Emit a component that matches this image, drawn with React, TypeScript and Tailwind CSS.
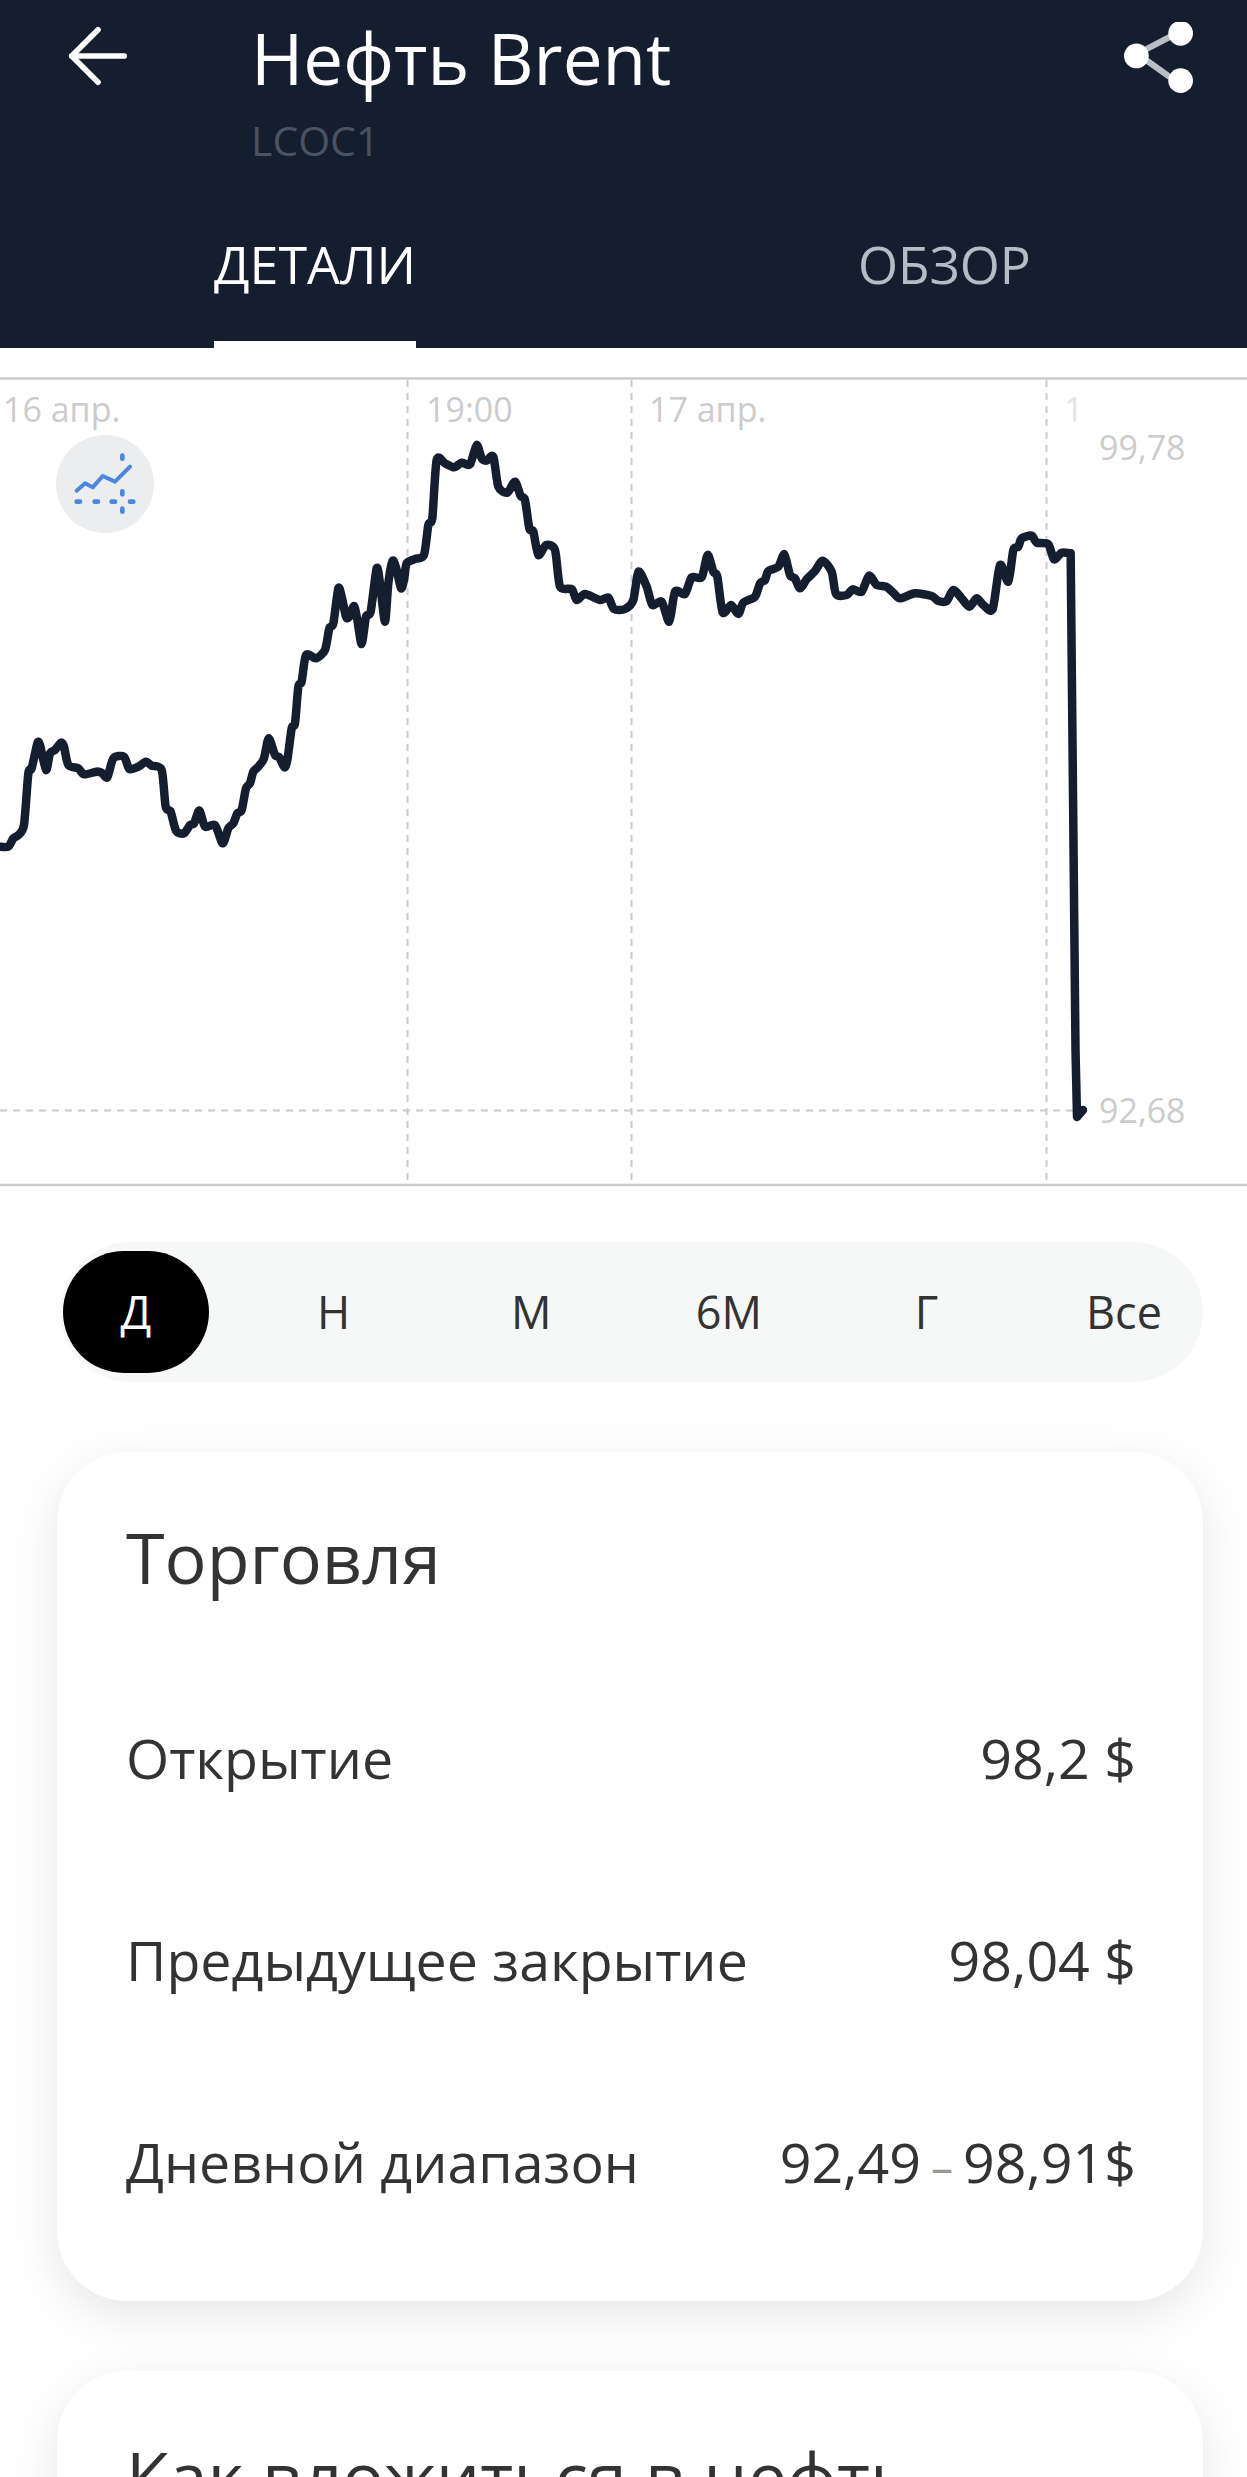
import type { ReactNode } from "react";
import { ArrowLeft } from "lucide-react";

// traced from the chart, [x, y] in crop pixels at 3x
const partA = [[0,1430],[25,1430],[40,1405],[55,1395],[72,1365],[85,1210],[95,1195],[112,1120],[120,1125],[138,1200],[150,1150],[165,1140],[183,1118],[192,1130],[205,1185],[235,1195],[252,1213],[290,1205],[305,1208],[322,1222],[340,1165],[372,1160],[388,1197],[415,1190],[438,1175],[455,1187],[485,1200],[497,1310],[512,1325],[528,1382],[552,1390],[570,1365],[582,1360],[598,1322],[615,1370],[645,1365],[668,1420],[685,1375],[700,1360],[712,1330],[725,1320],[738,1255],[750,1240],[760,1205],[775,1190],[792,1165],[806,1105],[825,1155],[838,1162],[853,1192],[862,1170],[875,1075],[885,1060],[895,950],[905,935],[918,855],[948,865],[975,840],[988,775],[1000,760],[1015,655],[1025,680],[1038,740],[1048,740],[1062,708],[1072,750],[1085,822],[1098,740],[1112,725],[1130,595],[1140,640],[1155,755],[1165,640],[1178,572],[1190,600],[1203,655],[1212,630]];
const partB = [[20,580],[45,567],[72,555],[85,465],[97,445],[110,270],[135,280],[162,292],[185,278],[210,283],[230,225],[245,265],[260,272],[280,260],[295,350],[322,368],[345,335],[362,378],[375,390],[388,475],[400,485],[415,555],[438,525],[465,540],[480,650],[515,657],[530,690],[555,672],[600,690],[625,683],[642,717],[675,717],[700,690],[715,605],[740,650],[757,705],[785,695],[808,755],[825,665],[855,672],[875,622],[905,622],[923,555],[940,605],[952,620],[968,727],[993,705],[1015,732],[1030,698],[1065,680],[1080,640],[1095,630],[1105,603],[1135,590],[1153,553],[1170,615],[1185,625]];
const partC = [[0,655],[20,628],[45,603],[68,572],[95,605],[108,672],[140,675],[158,658],[185,665],[207,617],[230,645],[258,650],[280,668],[300,685],[345,670],[395,678],[415,693],[440,693],[460,660],[485,685],[508,710],[530,685],[550,705],[578,717],[600,585],[625,635],[640,540],[655,530],[665,505],[695,497],[710,518],[745,523],[762,568],[785,548],[812,550]];

const toPage = (pts: number[][], ox: number) => pts.map(([x, y]) => [ox + x / 3, 370 + y / 3]);

// soft corners, the drop at the end stays straight
const smooth = (pts: number[][]) => {
  let d = `M${pts[0][0]} ${pts[0][1]}`;
  for (let i = 0; i < pts.length - 1; i++) {
    const p0 = pts[Math.max(i - 1, 0)];
    const p1 = pts[i];
    const p2 = pts[i + 1];
    const p3 = pts[Math.min(i + 2, pts.length - 1)];
    const c1x = p1[0] + (p2[0] - p0[0]) / 8;
    const c1y = p1[1] + (p2[1] - p0[1]) / 8;
    const c2x = p2[0] - (p3[0] - p1[0]) / 8;
    const c2y = p2[1] - (p3[1] - p1[1]) / 8;
    d += `C${c1x} ${c1y} ${c2x} ${c2y} ${p2[0]} ${p2[1]}`;
  }
  return d;
};

const linePath =
  smooth([...toPage(partA, 0), ...toPage(partB, 400), ...toPage(partC, 800)]) + "L1075.5 1050L1077 1117L1083 1110";

const ranges = ["Д", "Н", "М", "6М", "Г", "Все"];

const rows: { label: string; value: ReactNode }[] = [
  { label: "Открытие", value: "98,2 $" },
  { label: "Предыдущее закрытие", value: "98,04 $" },
  {
    label: "Дневной диапазон",
    value: (
      <>
        92,49<span className="mx-[10px] text-[44px] leading-none text-[#999999]">–</span>98,91$
      </>
    ),
  },
];

function Card({ title, children }: { title: string; children?: ReactNode }) {
  return (
    <div className="rounded-[70px] bg-white pl-[69px] pr-[67px] pt-[55px] pb-[89px] shadow-[0_14px_50px_rgba(0,0,0,0.1)]">
      <h2 className="text-[70px] leading-[100px] text-[#333333] whitespace-nowrap">{title}</h2>
      {children}
    </div>
  );
}

export default function App() {
  return (
    <div className="h-[2477px] overflow-hidden bg-white font-['Open_Sans',sans-serif]">
      {/* Header */}
      <header className="relative h-[348px] bg-[#141e2e] text-white">
        <div className="flex items-start justify-between pl-[53px] pr-[53px] pt-[11px]">
          <ArrowLeft className="h-[90px] w-[90px]" strokeWidth={1.5} />
          <div className="ml-[108px] mt-[3px] flex-1">
            <h1 className="text-[71px] leading-[88px]">Нефть Brent</h1>
            <p className="mt-[13px] text-[41px] leading-[50px] text-[#4a5361]">LCOC1</p>
          </div>
          <svg viewBox="0 0 70 70" className="mt-[11px] h-[72px] w-[72px]">
            <path d="M57 9 15 31l42 30" fill="none" stroke="#b9bec6" strokeWidth="6" />
            <circle cx="57" cy="11" r="12" fill="#fff" />
            <circle cx="14" cy="33" r="12" fill="#fff" />
            <circle cx="57" cy="57" r="12" fill="#fff" />
          </svg>
        </div>
        <nav className="absolute inset-x-0 bottom-0 flex pl-[214px] text-[52px] leading-[70px]">
          <div className="h-[119px] border-b-[7px] border-white">ДЕТАЛИ</div>
          <div className="ml-[442px] text-[51.5px] text-[#b6bcc6]">ОБЗОР</div>
        </nav>
      </header>

      {/* Chart */}
      <section className="relative mt-[29px] h-[810px] text-[34px] leading-[40px] text-[#cccccc]">
        <svg viewBox="0 377 1247 810" className="absolute inset-0 h-full w-full">
          <path d="M0 378.5H1247M0 1185H1247" stroke="#cccccc" strokeWidth="2.5" />
          <path d="M407.5 380V1184M631.5 380V1184M1046.5 380V1184M0 1110.5H1075" stroke="#cccccc" strokeWidth="2" strokeDasharray="7 6" fill="none" />
          <path d={linePath} fill="none" stroke="#141e2e" strokeWidth="8.5" strokeLinejoin="round" strokeLinecap="round" />
        </svg>
        <span className="absolute left-[3px] top-[12px]">16 апр.</span>
        <span className="absolute left-[426px] top-[12px]">19:00</span>
        <span className="absolute left-[649px] top-[12px]">17 апр.</span>
        <span className="absolute left-[1064px] top-[12px] text-[#e4e4e4]">1</span>
        <span className="absolute left-[1099px] top-[50px]">99,78</span>
        <span className="absolute left-[1099px] top-[713px]">92,68</span>
        <div className="absolute left-[56px] top-[58px] h-[98px] w-[98px] rounded-full bg-[#ecedef]">
          <svg viewBox="168 195 294 294" className="h-full w-full" fill="none" stroke="#4a88e0" strokeLinecap="round">
            <path d="M230 362 255 340 278 352 308 318 345 335 390 290" strokeWidth="12" strokeLinejoin="round" />
            <path d="M230 395h10M284 395h10M335 395h10M390 395h10M367 257v9M367 364v9M367 416v9" strokeWidth="14" />
          </svg>
        </div>
      </section>

      {/* Range switch */}
      <div className="ml-[60px] mr-[44px] mt-[55px] flex h-[140px] items-center justify-between rounded-full bg-[#f6f8f8] pl-[3px] pr-[6px] text-[45px] text-[#333333]">
        {ranges.map((r, i) => (
          <div
            key={r}
            className={`flex h-[122px] w-[146px] items-center justify-center rounded-full ${i === 0 ? "bg-black text-white" : ""}`}
          >
            {r}
          </div>
        ))}
      </div>

      {/* Cards */}
      <div className="ml-[57px] mr-[44px] mt-[70px] flex flex-col gap-[70px]">
        <Card title="Торговля">
          <div className="mt-[101px] flex flex-col gap-[102px] text-[55.5px] leading-[100px] text-[#333333]">
            {rows.map((row) => (
              <div key={row.label} className="flex items-center justify-between whitespace-nowrap">
                <span>{row.label}</span>
                <span>{row.value}</span>
              </div>
            ))}
          </div>
        </Card>
        <Card title="Как вложиться в нефть" />
      </div>
    </div>
  );
}
